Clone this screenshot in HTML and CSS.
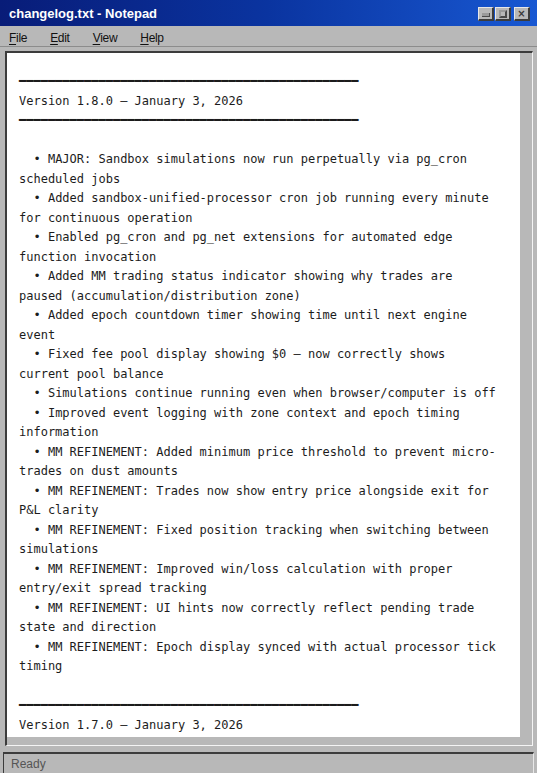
FILE: index.html
```html
<!DOCTYPE html>
<html lang="en">
<head>
    <meta charset="UTF-8">
    <meta name="viewport" content="width=device-width, initial-scale=1.0">
    <title>changelog.txt - Notepad</title>
    <link rel="stylesheet" href="styles.css">
</head>
<body>
    <div class="window">
        <div class="titlebar">
            <span class="title">changelog.txt - Notepad</span>
            <div class="title-buttons">
                <button class="tb-btn"><span class="glyph-min"></span></button>
                <button class="tb-btn"><span class="glyph-max"></span></button>
                <button class="tb-btn tb-close"><span class="glyph-close">×</span></button>
            </div>
        </div>

        <div class="menubar">
            <span class="menu-item"><u>F</u>ile</span>
            <span class="menu-item"><u>E</u>dit</span>
            <span class="menu-item"><u>V</u>iew</span>
            <span class="menu-item"><u>H</u>elp</span>
        </div>

        <div class="editor-frame">
            <div class="editor">
<pre class="text">━━━━━━━━━━━━━━━━━━━━━━━━━━━━━━━━━━━━━━━━━━━━━━━
Version 1.8.0 – January 3, 2026
━━━━━━━━━━━━━━━━━━━━━━━━━━━━━━━━━━━━━━━━━━━━━━━

  • MAJOR: Sandbox simulations now run perpetually via pg_cron scheduled jobs
  • Added sandbox-unified-processor cron job running every minute for continuous operation
  • Enabled pg_cron and pg_net extensions for automated edge function invocation
  • Added MM trading status indicator showing why trades are paused (accumulation/distribution zone)
  • Added epoch countdown timer showing time until next engine event
  • Fixed fee pool display showing $0 – now correctly shows current pool balance
  • Simulations continue running even when browser/computer is off
  • Improved event logging with zone context and epoch timing information
  • MM REFINEMENT: Added minimum price threshold to prevent micro-trades on dust amounts
  • MM REFINEMENT: Trades now show entry price alongside exit for P&amp;L clarity
  • MM REFINEMENT: Fixed position tracking when switching between simulations
  • MM REFINEMENT: Improved win/loss calculation with proper entry/exit spread tracking
  • MM REFINEMENT: UI hints now correctly reflect pending trade state and direction
  • MM REFINEMENT: Epoch display synced with actual processor tick timing

━━━━━━━━━━━━━━━━━━━━━━━━━━━━━━━━━━━━━━━━━━━━━━━
Version 1.7.0 – January 3, 2026</pre>
            </div>
        </div>

        <div class="statusbar">
            <span class="status-text">Ready</span>
        </div>
    </div>
</body>
</html>
```

FILE: styles.css
```css
* {
    margin: 0;
    padding: 0;
    box-sizing: border-box;
}

body {
    background: #b8b8b8;
    font-family: 'Liberation Sans', Arial, sans-serif;
    overflow: hidden;
}

.window {
    width: 537px;
    height: 773px;
    display: flex;
    flex-direction: column;
    background: #b8b8b8;
}

/* title bar */
.titlebar {
    height: 26px;
    flex-shrink: 0;
    display: flex;
    align-items: center;
    justify-content: space-between;
    padding: 0 7px 0 9px;
    background: linear-gradient(90deg, #081c78 0%, #0a34a0 50%, #1858d2 100%);
}

.title {
    color: #fff;
    font-weight: bold;
    font-size: 13px;
    padding-top: 1px;
}

.title-buttons {
    display: flex;
    gap: 1px;
    padding-top: 2px;
}

.tb-btn {
    width: 16px;
    height: 14px;
    background: #b8b8b8;
    border-top: 1px solid #e8e8e8;
    border-left: 1px solid #e8e8e8;
    border-right: 2px solid #3c3c3c;
    border-bottom: 2px solid #3c3c3c;
    display: flex;
    align-items: center;
    justify-content: center;
}

.tb-close {
    margin-left: 2px;
}

.glyph-min {
    width: 8px;
    height: 4px;
    margin-top: 2px;
    background: #9a9a9a;
    border-right: 1px solid #4a4a4a;
    border-bottom: 1px solid #4a4a4a;
}

.glyph-max {
    width: 8px;
    height: 8px;
    border: 2px solid #9a9a9a;
    border-right-color: #4a4a4a;
    border-bottom-color: #4a4a4a;
}

.glyph-close {
    font-family: 'DejaVu Sans', sans-serif;
    font-size: 10px;
    font-weight: bold;
    line-height: 1;
    color: #3a3a3a;
}

/* menu bar */
.menubar {
    height: 21px;
    flex-shrink: 0;
    display: flex;
    align-items: center;
    gap: 23px;
    padding: 3px 9px 0;
    font-size: 12px;
    letter-spacing: -0.3px;
    color: #111;
    border-bottom: 1px solid #8c8c8c;
}

.menu-item u {
    text-decoration-thickness: 1px;
    text-underline-offset: 2px;
}

/* editing area */
.editor-frame {
    flex: 1;
    min-height: 0;
    margin: 4px 4px 6px 5px;
    padding: 0 12px 8px 0;
    border-top: 2px solid #3c3c3c;
    border-left: 2px solid #3c3c3c;
    border-right: 1px solid #f4f4f4;
    border-bottom: 1px solid #f4f4f4;
    display: flex;
}

.editor {
    flex: 1;
    background: #fff;
    overflow: hidden;
    padding: 19px 21px 0 12px;
}

.text {
    font-family: 'DejaVu Sans Mono', monospace;
    font-size: 12px;
    line-height: 19.5px;
    color: #1c1c1c;
    white-space: pre-wrap;
}

/* status bar */
.statusbar {
    height: 21px;
    flex-shrink: 0;
    margin: 0 3px;
    padding-left: 7px;
    border-top: 2px solid #3c3c3c;
    border-left: 1px solid #3c3c3c;
    border-right: 1px solid #e8e8e8;
    font-size: 12px;
    color: #555;
    display: flex;
    align-items: center;
}
```
